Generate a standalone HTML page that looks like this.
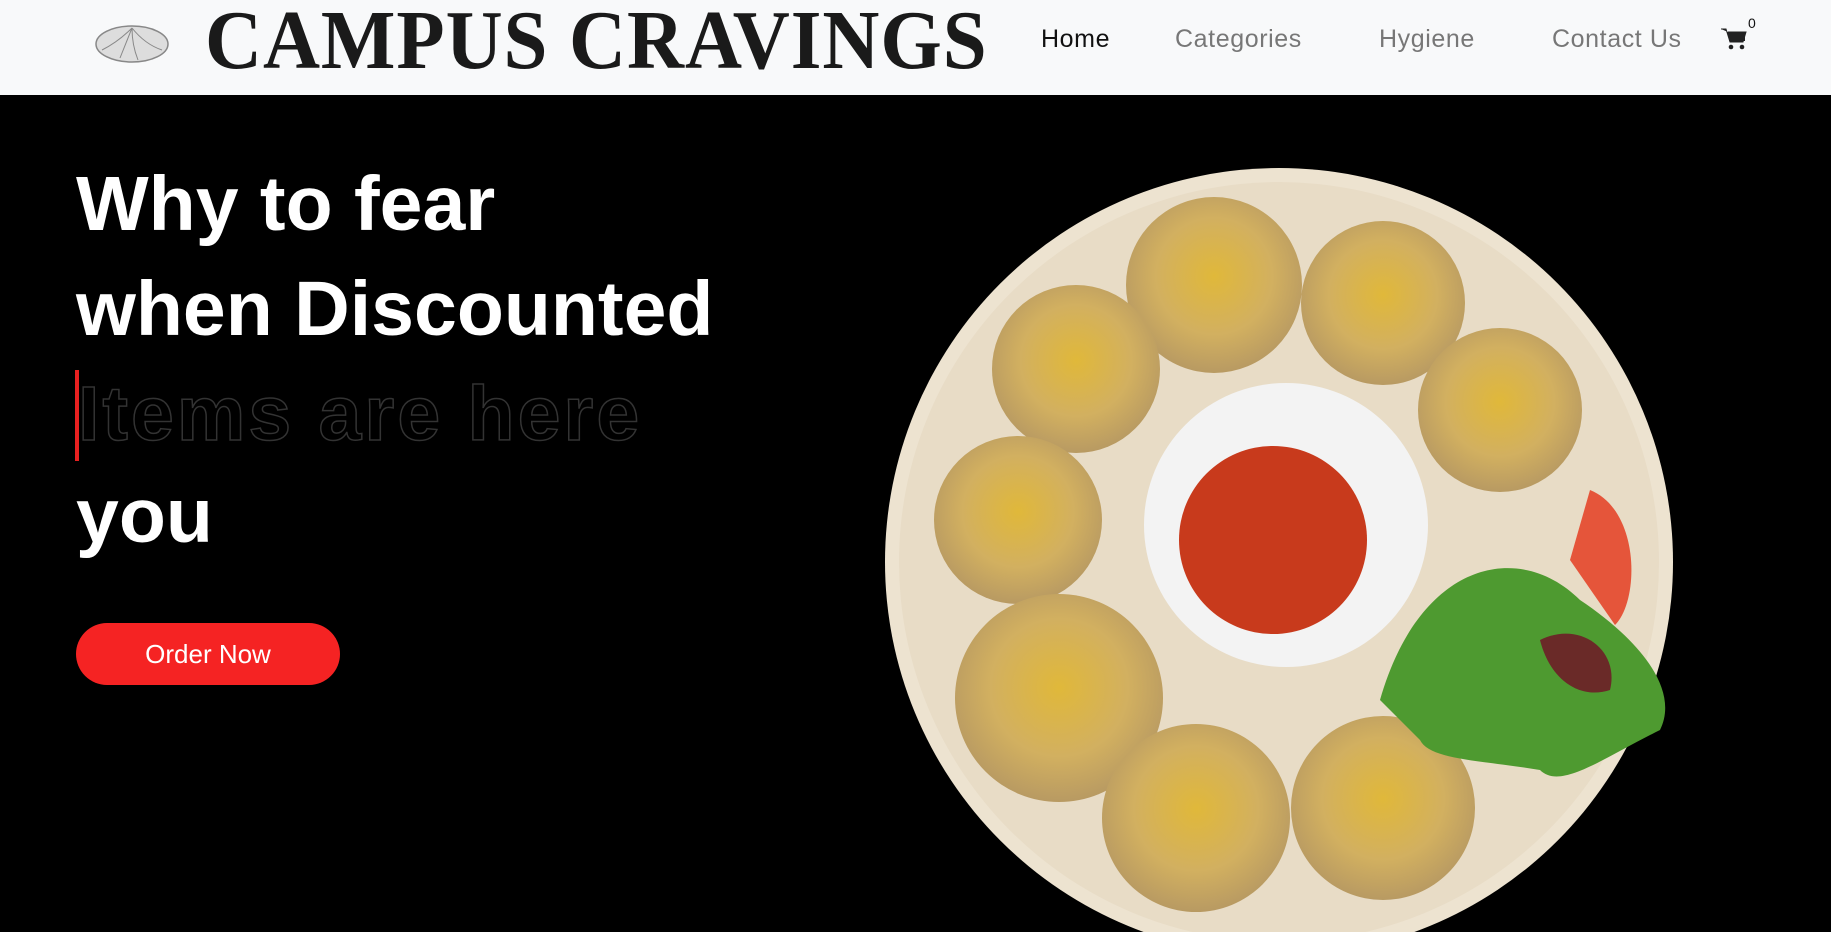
<!DOCTYPE html>
<html><head><meta charset="utf-8">
<style>
*{margin:0;padding:0;box-sizing:border-box}
html,body{width:1831px;height:932px;overflow:hidden;background:#000}
.hdr{position:absolute;left:0;top:0;width:1831px;height:95px;background:#f8f9fa}
.logo{position:absolute;left:205px;top:-8px;font-family:"Liberation Serif",serif;font-weight:bold;font-size:84px;color:#1a1a1a;transform:scaleX(0.94);transform-origin:left top;letter-spacing:1px;white-space:nowrap}
.nav a{position:absolute;top:25px;font-family:"Liberation Sans",sans-serif;font-size:25px;letter-spacing:0.6px;color:#777;text-decoration:none;white-space:nowrap}
.h{position:absolute;left:76px;font-family:"Liberation Sans",sans-serif;font-weight:bold;font-size:77px;color:#fff;white-space:nowrap}
.o{color:transparent;-webkit-text-stroke:1.5px #333;letter-spacing:3px}
.btn{position:absolute;left:76px;top:623px;width:264px;height:62px;border-radius:31px;background:#f52323;color:#fff;font-family:"Liberation Sans",sans-serif;font-size:26px;text-align:center;line-height:62px}
</style></head><body>
<div class="hdr">
<svg style="position:absolute;left:94px;top:22px" width="76" height="42" viewBox="0 0 76 42"><ellipse cx="38" cy="22" rx="36" ry="18" fill="#ddd" stroke="#888" stroke-width="1.5"/><path d="M38 6 C30 14 20 22 8 28 M38 6 C34 16 30 26 26 36 M38 6 C38 18 40 28 44 38 M38 6 C46 16 56 24 68 28" stroke="#888" fill="none"/></svg>
<div class="logo">CAMPUS CRAVINGS</div>
<div class="nav">
<a style="left:1041px;color:#111">Home</a>
<a style="left:1175px">Categories</a>
<a style="left:1379px">Hygiene</a>
<a style="left:1552px">Contact Us</a>
</div>
<svg style="position:absolute;left:1720px;top:27px" width="28" height="24" viewBox="0 0 26 24"><path d="M0 2h5l4 13h13l3-10H7" fill="#222" stroke="#222" stroke-width="1"/><rect x="8" y="5" width="16" height="9" fill="#222"/><circle cx="10" cy="20" r="2.3" fill="#222"/><circle cx="21" cy="20" r="2.3" fill="#222"/></svg>
<div style="position:absolute;left:1748px;top:15px;font-family:'Liberation Sans',sans-serif;font-size:14px;color:#111">0</div>
</div>
<div class="h" style="top:160px">Why to fear</div>
<div class="h" style="top:265px">when Discounted</div>
<div class="h o" style="top:370px;left:78px">Items are here</div>
<div style="position:absolute;left:75px;top:370px;width:4px;height:91px;background:#e82020"></div>
<div class="h" style="top:472px">you</div>
<div class="btn">Order Now</div>
<svg style="position:absolute;left:0;top:0" width="1831" height="932">
<defs><radialGradient id="m" cx="50%" cy="45%" r="55%"><stop offset="0" stop-color="#e0b83a"/><stop offset="0.6" stop-color="#d2b060"/><stop offset="1" stop-color="#b89a62"/></radialGradient></defs>
<circle cx="1279" cy="562" r="394" fill="#ede3d0"/>
<circle cx="1279" cy="562" r="380" fill="#e8dcc6"/>
<g fill="url(#m)">
<circle cx="1214" cy="285" r="88"/><circle cx="1383" cy="303" r="82"/><circle cx="1500" cy="410" r="82"/>
<circle cx="1076" cy="369" r="84"/><circle cx="1018" cy="520" r="84"/><circle cx="1059" cy="698" r="104"/>
<circle cx="1196" cy="818" r="94"/><circle cx="1383" cy="808" r="92"/>
</g>
<path d="M1590 490 C1640 510 1640 600 1615 625 L1570 560Z" fill="#e5553a"/>
<path d="M1380 700 C1420 560 1520 540 1580 600 C1640 640 1680 690 1660 730 C1600 760 1560 790 1540 770 C1480 760 1430 760 1420 740Z" fill="#4e9a30"/>
<path d="M1540 640 C1580 620 1620 650 1610 690 C1580 700 1550 680 1540 640Z" fill="#6a2a28"/>
<circle cx="1286" cy="525" r="142" fill="#f3f3f3"/>
<ellipse cx="1273" cy="540" rx="94" ry="94" fill="#c83a1c"/>
</svg>
</body></html>
